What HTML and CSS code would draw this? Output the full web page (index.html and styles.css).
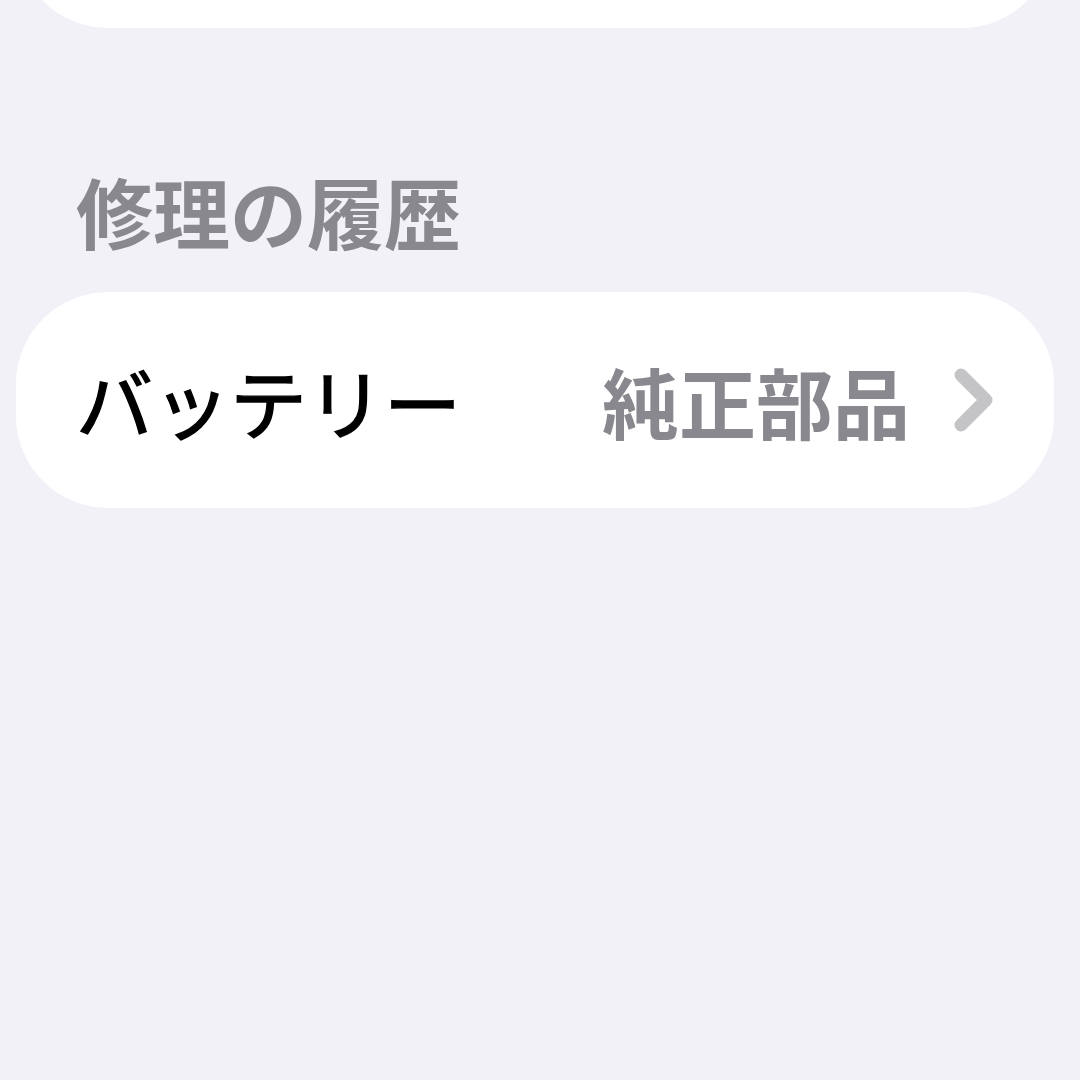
FILE: index.html
```html
<!DOCTYPE html>
<html lang="ja">
<head>
    <meta charset="UTF-8">
    <meta name="viewport" content="width=device-width, initial-scale=1.0">
    <title>修理の履歴</title>
    <link rel="stylesheet" href="styles.css">
</head>
<body>
    <div class="page">
        <div class="group group-top"></div>

        <h2 class="section-title">修理の履歴</h2>
        <a class="group row" href="#">
            <span class="row-label">バッテリー</span>
            <span class="row-value">純正部品</span>
            <svg class="chevron" width="40" height="64" viewBox="0 0 40 64">
                <path d="M7 7 L32 32 L7 57" fill="none" stroke="#c4c4c7" stroke-width="13" stroke-linecap="round" stroke-linejoin="round"/>
            </svg>
        </a>
    </div>
</body>
</html>
```

FILE: styles.css
```css
/* iOS style settings list */
body {
    font-family: "Noto Sans CJK JP", "Noto Sans", sans-serif;
    margin: 0;
    padding: 0;
    background-color: #f2f1f7;
}
.page {
    padding: 0 26px 0 16px;
}
.group {
    background-color: #fff;
    border-radius: 92px;
}
.group-top {
    height: 200px;
    margin-top: -172px;
}
.section-title {
    margin: 0;
    padding: 128px 0 0 60px;
    height: 136px;
    font-size: 77px;
    line-height: 110px;
    font-weight: 700;
    color: #89888e;
}
.row {
    display: flex;
    align-items: center;
    height: 216px;
    padding: 0 60px;
    text-decoration: none;
}
.row-label {
    flex: 1;
    font-size: 77px;
    font-weight: 400;
    color: #000;
    -webkit-text-stroke: 1.4px #000;
}
.row-value {
    font-size: 77px;
    font-weight: 700;
    color: #89888e;
}
.chevron {
    margin-left: 44px;
}
```
